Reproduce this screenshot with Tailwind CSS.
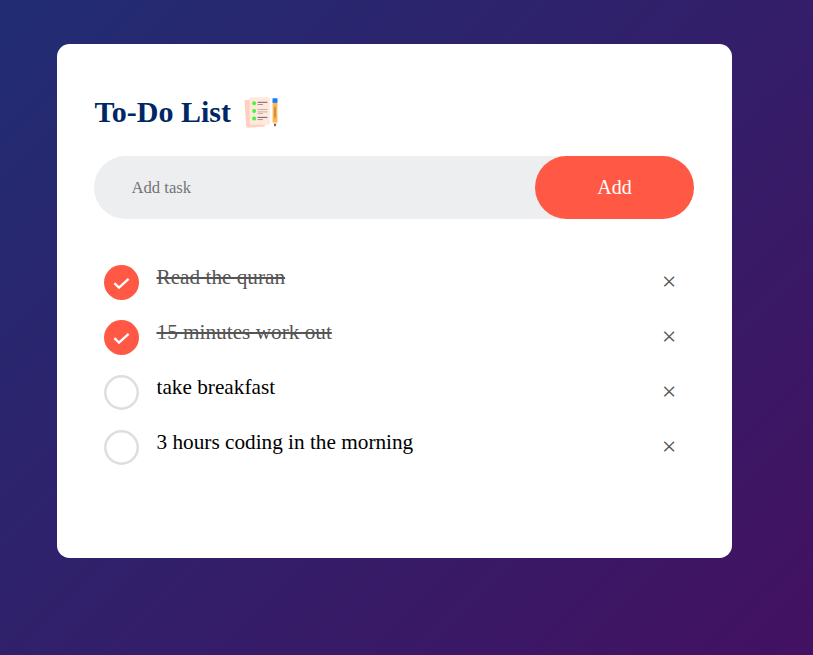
<!DOCTYPE html>
<html lang="en">
<head>
<meta charset="utf-8">
<title>To-Do List</title>
<script src="https://cdn.jsdelivr.net/npm/@tailwindcss/browser@4"></script>
</head>
<body class="h-[655px] overflow-hidden bg-[linear-gradient(135deg,#212d73,#431161)] pt-[44px] pl-[57px] font-['Liberation_Serif','Times_New_Roman',serif]">
<main class="h-[514px] w-[675px] rounded-[12.5px] bg-white pr-[38px] pl-[37px] pt-[49.5px]">
  <h2 class="mb-[25px] flex h-[37.5px] items-center pl-[0.5px] text-[30px] font-bold text-[#002765]">
    <span class="pb-[2px]">To-Do List</span>
    <svg class="ml-[11.5px] h-[37.5px] w-[37.5px]" viewBox="0 0 37.5 37.5">
      <path d="M2.4 6.5 9 5.5 23 31 22.5 32.5 6 33.8a1.8 1.8 0 0 1-1.7-1.7Z" fill="#ffcfc0"/>
      <rect x="7.6" y="3.2" width="20.2" height="27.6" rx="1.3" fill="#ffe9dc"/>
      <g fill="#47f53e"><circle cx="12.1" cy="9.3" r="2"/><circle cx="12.1" cy="17" r="2"/><circle cx="12.1" cy="24.6" r="2"/></g>
      <g stroke-width="1" stroke-linecap="round"><path d="M16 8.3h9M16 23.4h9" stroke="#735b78"/><path d="M16 15.5h9M16 17.9h9" stroke="#c9acad"/><path d="M16 10.5h4.5M16 25.6h4.5" stroke="#a78a94"/><path d="M16 19.6h4.5" stroke="#c9acad"/></g>
      <path d="M30.6 8h4.8v20.2h-4.8z" fill="#ffb54d"/>
      <rect x="30.5" y="4.2" width="5" height="4.6" rx=".6" fill="#0e80ff"/>
      <path d="M33 13v10.5" stroke="#99703e" stroke-width="1"/>
      <path d="M30.6 28h4.8L33 32.8Z" fill="#ffc6bd"/>
      <path d="M31.8 30.3h2.4L33 32.8Z" fill="#3b2038"/>
    </svg>
  </h2>
  <div class="mb-[31px] flex h-[62.5px] rounded-full bg-[#edeef0]">
    <input type="text" placeholder="Add task" class="min-w-0 flex-1 bg-transparent pt-[2px] pl-[37.5px] text-[16.67px] outline-none placeholder:text-[#757575]">
    <button class="w-[159px] rounded-full bg-[#ff5945] text-[20px] text-white">Add</button>
  </div>
  <ul class="text-[21.25px] leading-[25px] text-black">
    <li class="flex h-[55px] pl-[10px]">
      <svg class="mt-[15px] h-[35px] w-[35px]" viewBox="0 0 35 35"><circle cx="17.5" cy="17.5" r="17.5" fill="#ff5945"/><path d="m10.4 18.2 4.6 4.4 9.6-8.7" fill="none" stroke="#fff" stroke-width="2.3"/></svg>
      <span class="mt-[15px] ml-[17.5px] flex-1 text-[#555] line-through">Read the quran</span>
      <span class="mt-[7px] h-[50px] w-[50px] text-center text-[26px] leading-[50px] text-[#555]">×</span>
    </li>
    <li class="flex h-[55px] pl-[10px]">
      <svg class="mt-[15px] h-[35px] w-[35px]" viewBox="0 0 35 35"><circle cx="17.5" cy="17.5" r="17.5" fill="#ff5945"/><path d="m10.4 18.2 4.6 4.4 9.6-8.7" fill="none" stroke="#fff" stroke-width="2.3"/></svg>
      <span class="mt-[15px] ml-[17.5px] flex-1 text-[#555] line-through">15 minutes work out</span>
      <span class="mt-[7px] h-[50px] w-[50px] text-center text-[26px] leading-[50px] text-[#555]">×</span>
    </li>
    <li class="flex h-[55px] pl-[10px]">
      <svg class="mt-[15px] h-[35px] w-[35px]" viewBox="0 0 35 35"><circle cx="17.5" cy="17.5" r="16.2" fill="#fff" stroke="#dedede" stroke-width="2.5"/></svg>
      <span class="mt-[15px] ml-[17.5px] flex-1">take breakfast</span>
      <span class="mt-[7px] h-[50px] w-[50px] text-center text-[26px] leading-[50px] text-[#555]">×</span>
    </li>
    <li class="flex h-[55px] pl-[10px]">
      <svg class="mt-[15px] h-[35px] w-[35px]" viewBox="0 0 35 35"><circle cx="17.5" cy="17.5" r="16.2" fill="#fff" stroke="#dedede" stroke-width="2.5"/></svg>
      <span class="mt-[15px] ml-[17.5px] flex-1">3 hours coding in the morning</span>
      <span class="mt-[7px] h-[50px] w-[50px] text-center text-[26px] leading-[50px] text-[#555]">×</span>
    </li>
  </ul>
</main>
</body>
</html>
